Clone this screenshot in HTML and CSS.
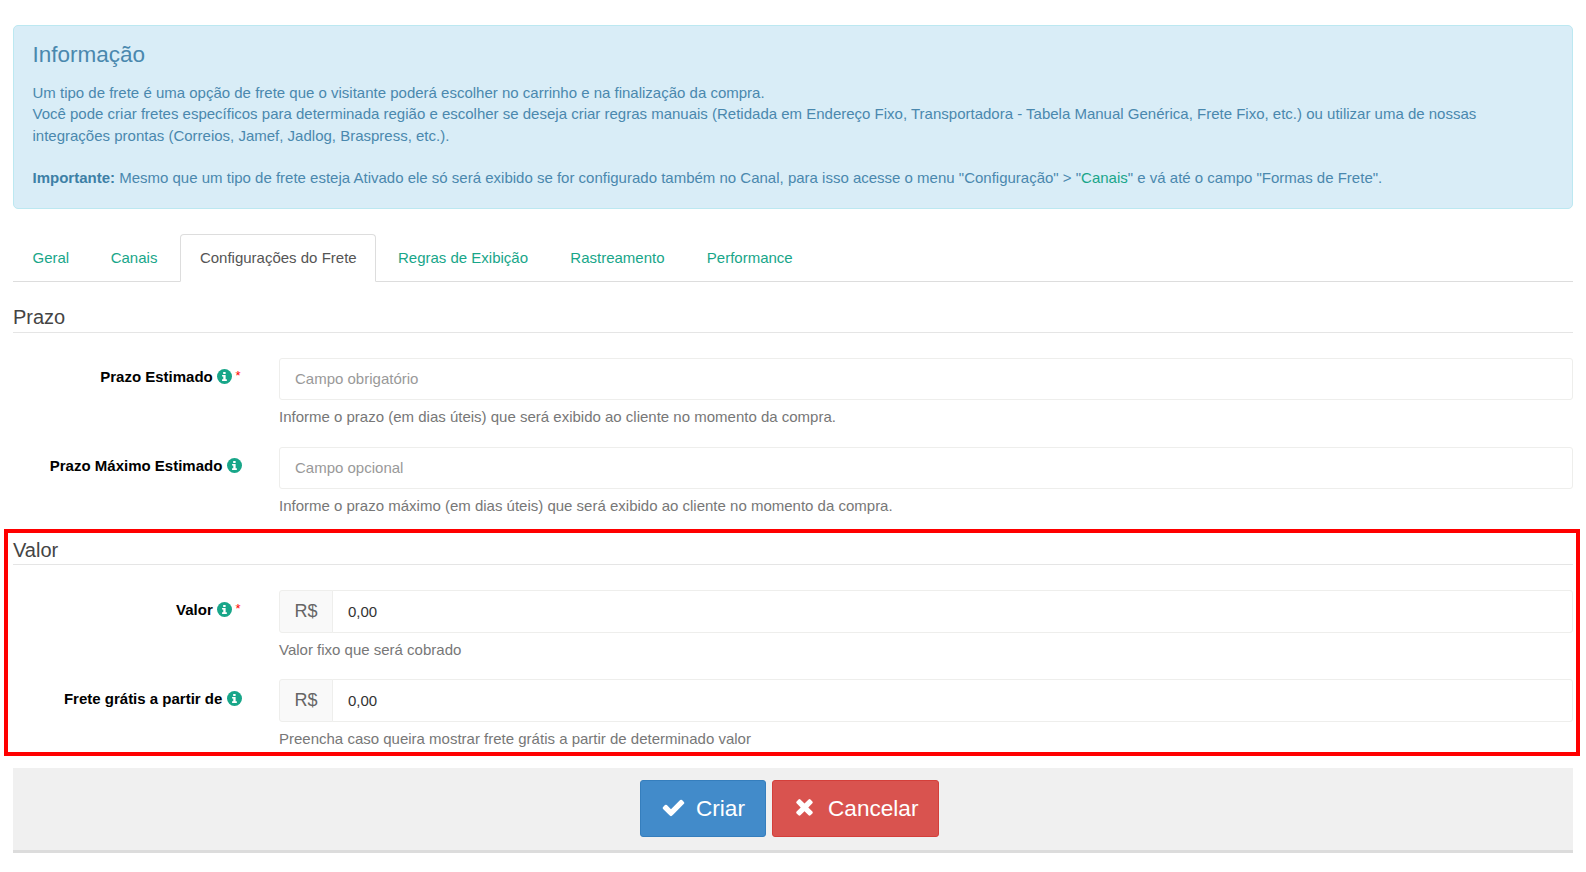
FILE: index.html
```html
<!DOCTYPE html>
<html lang="pt-BR">
<head>
<meta charset="utf-8">
<title>Configurações do Frete</title>
<link rel="stylesheet" href="styles.css">
</head>
<body>
<svg class="defs" width="0" height="0" aria-hidden="true">
  <symbol id="info" viewBox="0 0 16 16">
    <circle cx="8" cy="8" r="8" fill="#18a689"/>
    <path fill="#fff" d="M6.6 3.2h2.6v2H6.6zM5.4 6.4h3.8v4.6h1.3v1.7H5.4V11h1.3V8.1H5.4z"/>
  </symbol>
</svg>
<main class="page">
  <div class="alert">
    <h4 class="alert-title">Informação</h4>
    <p class="alert-text">Um tipo de frete é uma opção de frete que o visitante poderá escolher no carrinho e na finalização da compra.<br>Você pode criar fretes específicos para determinada região e escolher se deseja criar regras manuais (Retidada em Endereço Fixo, Transportadora - Tabela Manual Genérica, Frete Fixo, etc.) ou utilizar uma de nossas integrações prontas (Correios, Jamef, Jadlog, Braspress, etc.).</p>
    <p class="alert-text alert-note"><strong>Importante:</strong> Mesmo que um tipo de frete esteja Ativado ele só será exibido se for configurado também no Canal, para isso acesse o menu "Configuração" &gt; "<a href="#" class="alert-link">Canais</a>" e vá até o campo "Formas de Frete".</p>
  </div>

  <nav class="tabs">
    <a href="#" class="tab">Geral</a>
    <a href="#" class="tab">Canais</a>
    <a href="#" class="tab tab-active">Configurações do Frete</a>
    <a href="#" class="tab">Regras de Exibição</a>
    <a href="#" class="tab">Rastreamento</a>
    <a href="#" class="tab">Performance</a>
  </nav>

  <h3 class="section-title">Prazo</h3>
  <div class="form-row">
    <label class="field-label">Prazo Estimado <svg class="info-icon"><use href="#info"/></svg><span class="req">*</span></label>
    <div>
      <input class="input" type="text" placeholder="Campo obrigatório">
      <p class="help">Informe o prazo (em dias úteis) que será exibido ao cliente no momento da compra.</p>
    </div>
  </div>
  <div class="form-row">
    <label class="field-label">Prazo Máximo Estimado <svg class="info-icon"><use href="#info"/></svg></label>
    <div>
      <input class="input" type="text" placeholder="Campo opcional">
      <p class="help">Informe o prazo máximo (em dias úteis) que será exibido ao cliente no momento da compra.</p>
    </div>
  </div>

  <section class="value-section">
    <div class="highlight"></div>
    <h3 class="section-title section-title-value">Valor</h3>
    <div class="form-row form-row-money">
      <label class="field-label">Valor <svg class="info-icon"><use href="#info"/></svg><span class="req">*</span></label>
      <div>
        <div class="input-group"><span class="addon">R$</span><input class="input input-grouped" type="text" value="0,00"></div>
        <p class="help">Valor fixo que será cobrado</p>
      </div>
    </div>
    <div class="form-row form-row-money">
      <label class="field-label">Frete grátis a partir de <svg class="info-icon"><use href="#info"/></svg></label>
      <div>
        <div class="input-group"><span class="addon">R$</span><input class="input input-grouped" type="text" value="0,00"></div>
        <p class="help">Preencha caso queira mostrar frete grátis a partir de determinado valor</p>
      </div>
    </div>
  </section>

  <footer class="actions">
    <button class="btn btn-primary" type="button">
      <svg class="btn-icon" viewBox="0 0 1792 1792"><path fill="#fff" d="M1671 566q0 40-28 68l-724 724-136 136q-28 28-68 28t-68-28l-136-136-362-362q-28-28-28-68t28-68l136-136q28-28 68-28t68 28l294 295 656-657q28-28 68-28t68 28l136 136q28 28 28 68z"/></svg>Criar</button>
    <button class="btn btn-danger" type="button">
      <svg class="btn-icon btn-icon-x" viewBox="0 0 1792 1792"><path fill="#fff" d="M1490 1322q0 40-28 68l-136 136q-28 28-68 28t-68-28l-294-294-294 294q-28 28-68 28t-68-28l-136-136q-28-28-28-68t28-68l294-294-294-294q-28-28-28-68t28-68l136-136q28-28 68-28t68 28l294 294 294-294q28-28 68-28t68 28l136 136q28 28 28 68t-28 68l-294 294 294 294q28 28 28 68z"/></svg>Cancelar</button>
  </footer>
</main>
</body>
</html>
```
FILE: styles.css
```css
* { box-sizing: border-box; }
html, body { margin: 0; padding: 0; background: #fff; }
body { font-family: "Liberation Sans", Arial, sans-serif; font-size: 15px; color: #676a6c; overflow: hidden; }
.defs { position: absolute; }
.page { padding: 25px 13px 0; height: 872px; }

.alert { height: 184px; padding: 14px 19px 0 18.5px; background: #d9edf7; border: 1px solid #bce8f1; border-radius: 5px; }
.alert-title { margin: 0 0 11.8px; font-size: 22.5px; font-weight: 400; line-height: 30px; color: #4a88ae; }
.alert-text { margin: 0; line-height: 21.6px; color: #4a88ae; }
.alert-note { margin-top: 20.4px; }
.alert-note strong { color: #3d80a6; }
.alert-link { color: #18a689; text-decoration: none; }

.tabs { display: flex; height: 48px; margin-top: 25px; border-bottom: 1px solid #ddd; }
.tab { display: block; height: 47px; margin-right: 2px; padding: 0 20px 0 19.5px; line-height: 47px; color: #18a689; text-decoration: none; }
.tab-active { height: 48px; margin-left: 0.5px; padding: 0 18px 0 19px; border: 1px solid #ddd; border-bottom-color: #fff; border-radius: 4px 4px 0 0; background: #fff; color: #555; line-height: 46px; }
.tab-active ~ .tab { padding-left: 20.3px; }

.section-title { margin: 0 0 25px; padding: 22px 0 2px; height: 51px; font-size: 20px; font-weight: 400; line-height: 26px; color: #444; border-bottom: 1px solid #e5e5e5; }
.section-title-value { height: 29px; padding: 1px 0 1px; }

.form-row { display: grid; grid-template-columns: 228.5px 1fr; column-gap: 37.5px; height: 89px; }
.field-label { display: block; padding-top: 10px; text-align: right; font-weight: 700; line-height: 18px; color: #000; white-space: nowrap; }
.form-row-money .field-label { padding-top: 11px; }
.info-icon { display: inline-block; width: 15px; height: 15px; vertical-align: -2px; }
.req { display: inline-block; margin: 0 1px 0 3.5px; font-size: 13px; font-weight: 400; color: #f00; vertical-align: 2px; line-height: 10px; }

.input { display: block; width: 100%; height: 42px; padding: 0 15px 2px; border: 1px solid #eeeeec; border-radius: 3px; background: #fff; font: 15px "Liberation Sans", Arial, sans-serif; color: #333; outline: none; }
.input::placeholder { color: #999; opacity: 1; }
.input-group { display: flex; height: 43px; }
.addon { flex: none; width: 54px; display: flex; align-items: center; justify-content: center; font-size: 18px; color: #666; background: #f9f9f9; border: 1px solid #eeeeec; border-radius: 3px 0 0 3px; }
.input-grouped { flex: 1; height: 43px; margin-left: -1px; padding-bottom: 0; border-radius: 0 3px 3px 0; }
.help { margin: 0; padding-top: 7px; line-height: 20px; color: #777; white-space: nowrap; }

.value-section { position: relative; }
.highlight { position: absolute; left: -9.5px; top: -7px; right: -7px; height: 227px; border: 4px solid #f00; pointer-events: none; }

.actions { display: flex; justify-content: center; gap: 6px; height: 85px; padding: 12px 8px 0 0; background: #f0f0f0; border-bottom: 3px solid #dcdcdc; }
.btn { display: flex; align-items: center; height: 57px; border-radius: 3px; font: 22.6px "Liberation Sans", Arial, sans-serif; color: #fff; cursor: pointer; }
.btn-primary { width: 126px; padding: 0 0 0 20.5px; background: #428bca; border: 1px solid #357ebd; }
.btn-danger { width: 167px; padding: 0 0 0 19px; background: #d9534f; border: 1px solid #d43f3a; }
.btn-icon { width: 25px; height: 25px; margin: -3px 10px 0 0; flex: none; }
.btn-icon-x { margin: -5px 11.5px 0 0; }
```
